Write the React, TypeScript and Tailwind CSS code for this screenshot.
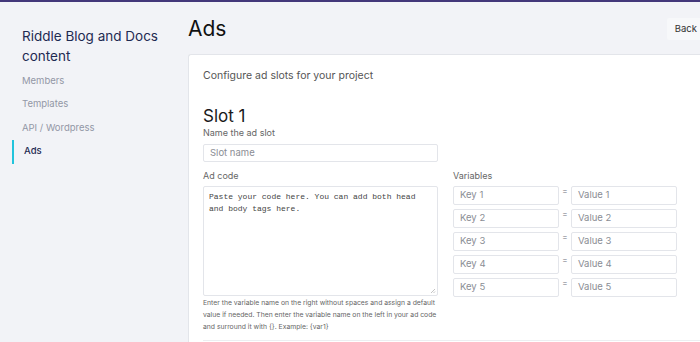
import React from "react";

const font = { fontFamily: "Inter, 'Noto Sans', sans-serif" };

function VarRow({ n }: { n: number }) {
  return (
    <div className="flex items-start">
      <div className="w-[106px] h-[19px] border border-[#e3e5ea] rounded-[2px] flex items-center pl-[6px] text-[9.5px] text-[#8a8d94]">
        Key {n}
      </div>
      <div className="w-[12px] text-center text-[8px] leading-[10px] text-[#9a9da4]">=</div>
      <div className="w-[106px] h-[19px] border border-[#e3e5ea] rounded-[2px] flex items-center pl-[6px] text-[9.5px] text-[#8a8d94]">
        Value {n}
      </div>
    </div>
  );
}

export default function App() {
  return (
    <div className="w-[700px] h-[342px] overflow-hidden bg-[#f2f3f7]" style={font}>
      <div className="h-[2px] bg-[#43377a]" />
      <div className="flex">
        <aside className="w-[188px] shrink-0 pt-[24px]">
          <div className="pl-[22px] text-[13.5px] leading-[20px] text-[#1e2a52]">
            Riddle Blog and Docs
            <br />
            content
          </div>
          <nav className="mt-[3px] flex flex-col">
            <div className="pl-[22px] h-[23.5px] flex items-center text-[9.5px] text-[#9297a6]">Members</div>
            <div className="pl-[22px] h-[23.5px] flex items-center text-[9.5px] text-[#9297a6]">Templates</div>
            <div className="pl-[22px] h-[23.5px] flex items-center text-[9.5px] text-[#9297a6]">API / Wordpress</div>
            <div className="ml-[12px] pl-[10px] h-[24px] flex items-center text-[9.5px] text-[#1e2a52] font-medium border-l-[2px] border-[#22c4dc]">
              Ads
            </div>
          </nav>
        </aside>
        <main className="flex-1 min-w-0">
          <div className="flex items-center justify-between h-[52px] pt-[2px]">
            <h1 className="text-[21px] leading-[24px] text-[#111] font-normal">Ads</h1>
            <div className="h-[22px] pl-[8px] pr-[3px] bg-[#f7f8fa] flex items-center text-[9.5px] text-[#333] rounded-l-[2px]">
              Back
            </div>
          </div>
          <div className="bg-white border-l border-t border-[#e3e5ea] rounded-tl-[3px] h-[300px] pl-[14px]">
            <div className="pt-[14px] text-[10.5px] leading-[14px] text-[#555]">Configure ad slots for your project</div>
            <div className="mt-[23px] text-[17px] leading-[20px] text-[#1a1a1a]">Slot 1</div>
            <div className="mt-[1px] text-[9px] leading-[12px] text-[#666]">Name the ad slot</div>
            <div className="mt-[5px] w-[235px] h-[18px] border border-[#e3e5ea] rounded-[2px] flex items-center pl-[6px] text-[9.5px] text-[#8a8d94]">
              Slot name
            </div>
            <div className="flex gap-[15px] mt-[8px]">
              <div className="w-[235px]">
                <div className="text-[9px] leading-[12px] text-[#666]">Ad code</div>
                <div className="relative mt-[4px] h-[110px] border border-[#e3e5ea] rounded-[2px] px-[5px] pt-[4px] text-[8px] leading-[12px] text-[#444]" style={{ fontFamily: "'Liberation Mono', monospace" }}>
                  Paste your code here. You can add both head
                  <br />
                  and body tags here.
                  <svg className="absolute right-[1px] bottom-[1px]" width="6" height="6" viewBox="0 0 6 6">
                    <path d="M5 1 L1 5 M5 3.5 L3.5 5" stroke="#aaa" strokeWidth="0.7" />
                  </svg>
                </div>
                <div className="mt-[1px] text-[6.8px] leading-[12px] text-[#666] whitespace-nowrap">
                  Enter the variable name on the right without spaces and assign a default
                  <br />
                  value if needed. Then enter the variable name on the left in your ad code
                  <br />
                  and surround it with {"{}"}. Example: {"{var1}"}
                </div>
              </div>
              <div>
                <div className="text-[9px] leading-[12px] text-[#666]">Variables</div>
                <div className="mt-[4px] flex flex-col gap-[4px]">
                  <VarRow n={1} />
                  <VarRow n={2} />
                  <VarRow n={3} />
                  <VarRow n={4} />
                  <VarRow n={5} />
                </div>
              </div>
            </div>
            <div className="mt-[7px] h-px bg-[#eceef1]" />
          </div>
        </main>
      </div>
    </div>
  );
}
